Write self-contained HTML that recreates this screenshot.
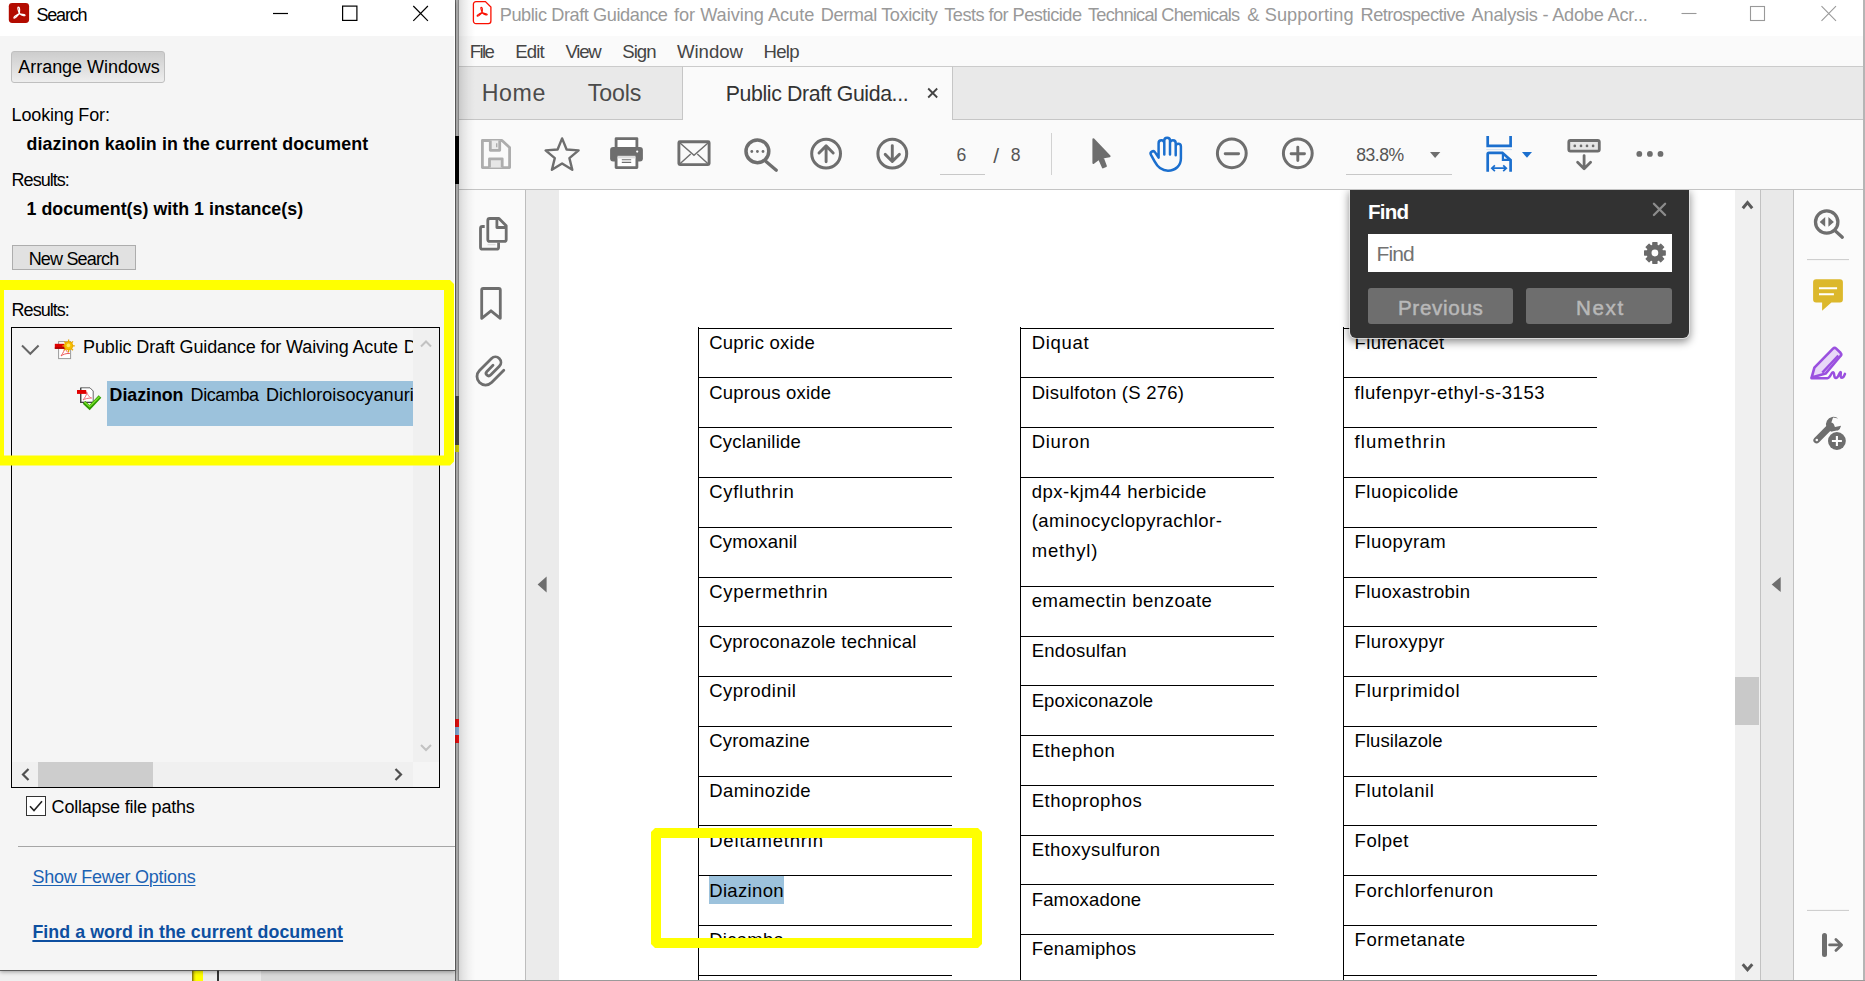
<!DOCTYPE html>
<html lang="en">
<head>
<meta charset="utf-8">
<title>Search - Adobe Acrobat Reader DC</title>
<style>
*{box-sizing:border-box;margin:0;padding:0}
html,body{width:1865px;height:981px;overflow:hidden;background:#fff}
body{font-family:"Liberation Sans",sans-serif;color:#000;position:relative}
.a{position:absolute}
.t{position:absolute;white-space:nowrap;line-height:1}
svg{position:absolute;overflow:visible}
.clip{position:absolute;overflow:hidden}
</style>
</head>
<body>
<div class="a" style="left:0px;top:0px;width:1865px;height:981px;background:#fff"></div><div class="a" style="left:455px;top:0px;width:4px;height:981px;background:linear-gradient(90deg,#666 0,#666 1px,#b4b4b4 1px,#b4b4b4 2px,#acacac 2px,#acacac 3px,#888 3px)"></div><div class="a" style="left:0px;top:969px;width:455px;height:12px;background:linear-gradient(90deg,#f0f0f0 0,#f0f0f0 192px,#7a6a10 192px,#e8e000 194.5px,#ffff00 196px,#ffff00 203.5px,#ececec 203.5px,#ececec 217.5px,#333 217.5px,#333 219px,#e9e9e9 219px,#e9e9e9 261px,#d9d9d9 261px)"></div><div class="a" style="left:455px;top:136px;width:4px;height:48px;background:#000"></div><div class="a" style="left:455px;top:396px;width:4px;height:49px;background:#444"></div><div class="a" style="left:455px;top:445px;width:4px;height:7px;background:#c8c800"></div><div class="a" style="left:455px;top:719px;width:4px;height:8px;background:#e01010"></div><div class="a" style="left:455px;top:727px;width:4px;height:8px;background:#7fa6d0"></div><div class="a" style="left:455px;top:735px;width:4px;height:8px;background:#e01010"></div>
<!-- search window -->
<div class="a" style="left:0px;top:0px;width:455px;height:969.5px;background:#f5f5f5;box-shadow:0 1px 0 rgba(70,70,70,.8),0 2px 4px rgba(0,0,0,.35)"></div><div class="a" style="left:0px;top:0px;width:455px;height:36px;background:#fff"></div><div class="a" style="left:454px;top:36px;width:1px;height:933px;background:#fff"></div><span class="t" style="left:36.50px;top:6.01px;font-size:18px;color:#000;letter-spacing:-1.209px;">Search</span><svg style="left:0;top:0" width="455" height="36"><g stroke="#000" stroke-width="1.2" fill="none"><path d="M273 13.5h15"/><rect x="342.6" y="6.1" width="14.3" height="14.3"/><path d="M413.3 6l14.6 14.8M427.9 6l-14.6 14.8"/></g></svg><div class="a" style="left:11px;top:51px;width:154px;height:31.5px;border:1px solid #bfbfbf;border-radius:3px;background:linear-gradient(#cdcdcd,#eeeeee)"></div><span class="t" style="left:18.30px;top:57.71px;font-size:18px;color:#000;letter-spacing:-0.040px;">Arrange Windows</span><span class="t" style="left:11.60px;top:106.32px;font-size:18px;color:#000;letter-spacing:-0.160px;">Looking For:</span><span class="t" style="left:26.50px;top:135.81px;font-size:17.8px;color:#000;font-weight:700;letter-spacing:0.127px;">diazinon kaolin in the current document</span><span class="t" style="left:11.60px;top:171.10px;font-size:18px;color:#000;letter-spacing:-0.976px;">Results:</span><span class="t" style="left:26.50px;top:200.62px;font-size:17.8px;color:#000;font-weight:700;letter-spacing:0.030px;">1 document(s) with 1 instance(s)</span><div class="a" style="left:12px;top:244.5px;width:124px;height:25px;border:1px solid #adadad;background:#e1e1e1"></div><span class="t" style="left:28.70px;top:249.60px;font-size:18px;color:#000;letter-spacing:-0.827px;">New Search</span><span class="t" style="left:11.60px;top:300.60px;font-size:18px;color:#000;letter-spacing:-0.976px;">Results:</span><div class="a" style="left:11px;top:327px;width:429px;height:461px;border:1px solid #000;background:#f5f5f5"></div><div class="a" style="left:413px;top:328px;width:26px;height:434px;background:#f0f0f0"></div><svg style="left:413px;top:328px" width="26" height="434"><g stroke="#c2c2c2" stroke-width="2" fill="none"><path d="M8 18.5l5-5 5 5"/><path d="M8 417l5 5 5-5"/></g></svg><div class="a" style="left:12px;top:762px;width:401px;height:25px;background:#f0f0f0"></div><div class="a" style="left:38px;top:762px;width:115px;height:25px;background:#cdcdcd"></div><svg style="left:12px;top:762px" width="401" height="25"><g stroke="#505050" stroke-width="2.2" fill="none"><path d="M16.5 7l-5.5 5.5 5.5 5.5"/><path d="M383.5 7l5.5 5.5-5.5 5.5"/></g></svg><svg style="left:0;top:0" width="455" height="500"><path d="M22 345.5l8.3 8.3 8.3-8.3" stroke="#666" stroke-width="2" fill="none"/></svg><div class="clip" style="left:12px;top:328px;width:400.5px;height:120px"><span class="t" style="left:71.10px;top:9.91px;font-size:18px;color:#000;letter-spacing:-0.121px;">Public Draft Guidance for Waiving Acute</span><span class="t" style="left:391.80px;top:9.91px;font-size:18px;color:#000;">Dermal Toxicity</span></div><div class="a" style="left:107px;top:381.3px;width:305.5px;height:44.7px;background:#9cc2dc"></div><div class="clip" style="left:107px;top:381px;width:305.5px;height:45px"><span class="t" style="left:2.60px;top:6.31px;font-size:17.8px;color:#000;font-weight:700;letter-spacing:-0.028px;">Diazinon</span><span class="t" style="left:83.60px;top:5.32px;font-size:18px;color:#000;letter-spacing:-0.422px;">Dicamba</span><span class="t" style="left:159.00px;top:5.32px;font-size:18px;color:#000;letter-spacing:0.039px;">Dichloroisocyanuric acid</span></div><div class="a" style="left:26px;top:795.5px;width:20px;height:20px;border:1.3px solid #333;background:#fff"></div><svg style="left:26px;top:795.5px" width="20" height="20"><path d="M4 10.2l4 4.3 8-9.3" stroke="#222" stroke-width="1.6" fill="none"/></svg><span class="t" style="left:51.60px;top:798.21px;font-size:18px;color:#000;letter-spacing:-0.216px;">Collapse file paths</span><div class="a" style="left:18px;top:846px;width:437px;height:1px;background:#a6a6a6"></div><span class="t" style="left:32.40px;top:868.41px;font-size:18px;color:#1b62b3;letter-spacing:-0.222px;text-decoration:underline;text-underline-offset:2px;text-decoration-thickness:1.2px;">Show Fewer Options</span><span class="t" style="left:32.40px;top:924.40px;font-size:17.8px;color:#0d4fa0;font-weight:700;letter-spacing:0.070px;text-decoration:underline;text-underline-offset:2px;text-decoration-thickness:1.5px;">Find a word in the current document</span><svg style="left:0;top:0" width="455" height="500" viewBox="0 0 455 500"><rect x="8.8" y="2.9" width="20.3" height="20.1" rx="3.4" fill="#b30b00"/><path d="M18.4 7.1C19.9 7.1 19.7 10.2 19.4 13.4C21.2 14.6 24.2 13.9 25 15C25.6 16.1 22.4 16.2 19.4 13.6C17.6 15.2 15.6 18.6 14.2 18.2C12.9 17.6 15.8 15.3 19.3 13.5C18.4 10.8 17.1 7.2 18.4 7.1Z" fill="none" stroke="#fff" stroke-width="1.2" stroke-linejoin="round"/><rect x="58.6" y="341.6" width="12" height="17" fill="#fff" stroke="#9a9a9a" stroke-width="1"/><path d="M61 356C63 353 65 350 64.6 346.5C66 351 68 353 69.6 353.5C66 353.2 63 354.5 61 356Z" fill="none" stroke="#ee5a5a" stroke-width="1"/><rect x="54.8" y="343.8" width="9.8" height="5" fill="#dd0000"/><rect x="54.8" y="347.4" width="9.8" height="1.4" fill="#a00000"/><circle cx="68.6" cy="345.8" r="4.6" fill="#f0b000"/><circle cx="68.6" cy="345.8" r="2.6" fill="#ffe040"/><g stroke="#e8a800" stroke-width="1.3"><path d="M68.6 339.6V352M62.4 345.8H74.8M64.2 341.4L73 350.2M73 341.4L64.2 350.2"/></g><circle cx="68.6" cy="345.8" r="3.4" fill="#f6c000"/><circle cx="68.4" cy="345.4" r="1.8" fill="#ffe860"/><path d="M80.7 387.8H90L93.2 391V402.4H80.7Z" fill="#fff" stroke="#666" stroke-width="1"/><path d="M80.7 387.8V402.4H93.2" fill="none" stroke="#444" stroke-width="1.3"/><path d="M83 400C85 397.5 87 395 86.6 391.8C88 396 90 397.6 91.6 398C88 398 85 398.8 83 400Z" fill="none" stroke="#ee6a7a" stroke-width="1"/><rect x="77" y="390" width="9.2" height="3.9" fill="#e00000"/><path d="M84 402.4L89.6 407.6L100 396.6" fill="none" stroke="#2e9a00" stroke-width="3.6" stroke-linejoin="miter"/><path d="M84.4 402L89.6 406.6L99.6 396.4" fill="none" stroke="#7be02a" stroke-width="1.4"/></svg>
<!-- acrobat window -->
<div class="a" style="left:459px;top:0px;width:1406px;height:981px;background:#fff"></div><div class="a" style="left:459px;top:36px;width:1406px;height:30px;background:#fafafa"></div><div class="a" style="left:459px;top:66px;width:1406px;height:54px;background:#e9e9e9;border-top:1px solid #cbcbcb;border-bottom:1px solid #c6c6c6"></div><div class="a" style="left:682px;top:66px;width:271px;height:54px;background:#fafafa;border-top:1px solid #cbcbcb;border-left:1px solid #c6c6c6;border-right:1px solid #c6c6c6"></div><div class="a" style="left:459px;top:120px;width:1406px;height:70px;background:#fafafa;border-bottom:1px solid #c4c4c4"></div><span class="t" style="left:499.70px;top:5.82px;font-size:18.2px;color:#999;letter-spacing:-0.436px;">Public Draft Guidance</span><span class="t" style="left:674.00px;top:5.82px;font-size:18.2px;color:#999;letter-spacing:-0.035px;">for Waiving Acute</span><span class="t" style="left:820.80px;top:5.82px;font-size:18.2px;color:#999;letter-spacing:-0.419px;">Dermal Toxicity</span><span class="t" style="left:944.30px;top:5.82px;font-size:18.2px;color:#999;letter-spacing:-0.549px;">Tests for Pesticide</span><span class="t" style="left:1088.00px;top:5.82px;font-size:18.2px;color:#999;letter-spacing:-0.755px;">Technical Chemicals</span><span class="t" style="left:1247.30px;top:5.82px;font-size:18.2px;color:#999;letter-spacing:0.095px;">&amp; Supporting</span><span class="t" style="left:1360.60px;top:5.82px;font-size:18.2px;color:#999;letter-spacing:-0.559px;">Retrospective</span><span class="t" style="left:1471.60px;top:5.82px;font-size:18.2px;color:#999;letter-spacing:-0.212px;">Analysis - Adobe Acr...</span><svg style="left:0;top:0" width="1865" height="36"><g stroke="#999" stroke-width="1.1" fill="none"><path d="M1681.5 13.5h15"/><rect x="1750.5" y="6.5" width="14" height="14"/><path d="M1821.5 6.2l14.5 14.6M1836 6.2l-14.5 14.6"/></g></svg><span class="t" style="left:469.70px;top:43.31px;font-size:18.6px;color:#454545;letter-spacing:-1.623px;">File</span><span class="t" style="left:515.30px;top:43.31px;font-size:18.6px;color:#454545;letter-spacing:-0.916px;">Edit</span><span class="t" style="left:565.50px;top:43.31px;font-size:18.6px;color:#454545;letter-spacing:-1.223px;">View</span><span class="t" style="left:622.20px;top:43.31px;font-size:18.6px;color:#454545;letter-spacing:-0.940px;">Sign</span><span class="t" style="left:677.00px;top:43.31px;font-size:18.6px;color:#454545;letter-spacing:-0.028px;">Window</span><span class="t" style="left:763.50px;top:43.31px;font-size:18.6px;color:#454545;letter-spacing:-0.750px;">Help</span><span class="t" style="left:481.80px;top:81.71px;font-size:23.2px;color:#4b4b4b;letter-spacing:0.547px;">Home</span><span class="t" style="left:587.70px;top:81.71px;font-size:23.2px;color:#4b4b4b;letter-spacing:-0.135px;">Tools</span><span class="t" style="left:725.80px;top:84.41px;font-size:21.3px;color:#333;letter-spacing:-0.389px;">Public Draft Guida...</span><svg style="left:0;top:0" width="1000" height="120"><path d="M928.2 88.5l9 9M937.2 88.5l-9 9" stroke="#444" stroke-width="1.8" fill="none"/></svg><span class="t" style="left:956.60px;top:146.61px;font-size:17.6px;color:#555;">6</span><span class="t" style="left:993.20px;top:144.81px;font-size:21px;color:#555;">/</span><span class="t" style="left:1010.80px;top:146.61px;font-size:17.6px;color:#555;">8</span><div class="a" style="left:940px;top:174px;width:44.5px;height:1px;background:#c8c8c8"></div><div class="a" style="left:1051px;top:133px;width:1px;height:42px;background:#d2d2d2"></div><span class="t" style="left:1356.20px;top:146.61px;font-size:17.6px;color:#555;letter-spacing:-0.473px;">83.8%</span><div class="a" style="left:1346px;top:174px;width:106px;height:1px;background:#c8c8c8"></div><svg style="left:0;top:0" width="600" height="36" viewBox="0 0 600 36"><path d="M476 1.6H485.4L490.9 7V21a2.6 2.6 0 0 1 -2.6 2.6H476a2.6 2.6 0 0 1 -2.6 -2.6V4.2a2.6 2.6 0 0 1 2.6 -2.6Z" fill="#fff" stroke="#fa0f00" stroke-width="1.3"/><path d="M481.3 7.2C482.6 7.2 482.5 10 482.2 12.4C483.8 13.8 486.6 13.2 487.2 14.3C487.6 15.4 484.8 15.3 482.2 12.8C480.6 14 478.5 16.7 477.3 16.2C476.3 15.6 479 13.8 482.1 12.6C481.3 10.2 480.2 7.3 481.3 7.2Z" fill="none" stroke="#fa0f00" stroke-width="1.1" stroke-linejoin="round"/></svg>
<div class="a" style="left:459px;top:190px;width:67px;height:791px;background:#fafafa;border-right:1px solid #bdbdbd"></div><div class="a" style="left:459px;top:0px;width:16px;height:981px;background:linear-gradient(90deg,rgba(0,0,0,.14),rgba(0,0,0,.085) 25%,rgba(0,0,0,.035) 60%,rgba(0,0,0,0))"></div><div class="a" style="left:526px;top:190px;width:33px;height:791px;background:#ebebeb"></div><div class="a" style="left:559px;top:190px;width:1176px;height:791px;background:#fff"></div><div class="a" style="left:1735px;top:190px;width:26px;height:791px;background:#f0f0f0;border-right:1px solid #c2c2c2"></div><div class="a" style="left:1735px;top:677px;width:24px;height:48px;background:#c9c9c9"></div><div class="a" style="left:1761px;top:190px;width:33px;height:791px;background:#e9e9e9;border-right:1px solid #c2c2c2"></div><div class="a" style="left:1794px;top:190px;width:71px;height:791px;background:#fbfbfb"></div><div class="a" style="left:1863px;top:0px;width:2px;height:981px;background:#b5b5b5"></div><div class="a" style="left:459px;top:979.5px;width:1406px;height:1.5px;background:#9a9a9a"></div><div class="clip" style="left:559px;top:190px;width:1176px;height:789.5px"><div class="a" style="left:-559px;top:-190px"><div class="a" style="left:698px;top:327px;width:1px;height:660px;background:#000"></div><div class="a" style="left:698px;top:328px;width:254px;height:1px;background:#000"></div><div class="a" style="left:698px;top:377px;width:254px;height:1px;background:#000"></div><div class="a" style="left:698px;top:427px;width:254px;height:1px;background:#000"></div><div class="a" style="left:698px;top:477px;width:254px;height:1px;background:#000"></div><div class="a" style="left:698px;top:527px;width:254px;height:1px;background:#000"></div><div class="a" style="left:698px;top:577px;width:254px;height:1px;background:#000"></div><div class="a" style="left:698px;top:626px;width:254px;height:1px;background:#000"></div><div class="a" style="left:698px;top:676px;width:254px;height:1px;background:#000"></div><div class="a" style="left:698px;top:726px;width:254px;height:1px;background:#000"></div><div class="a" style="left:698px;top:776px;width:254px;height:1px;background:#000"></div><div class="a" style="left:698px;top:825px;width:254px;height:1px;background:#000"></div><div class="a" style="left:698px;top:875px;width:254px;height:1px;background:#000"></div><div class="a" style="left:698px;top:925px;width:254px;height:1px;background:#000"></div><div class="a" style="left:698px;top:975px;width:254px;height:1px;background:#000"></div><div class="a" style="left:709.1px;top:876.4px;width:74.7px;height:27.4px;background:#9cc2dc"></div><span class="t" style="left:709.20px;top:334.01px;font-size:18.5px;color:#000;letter-spacing:0.249px;">Cupric oxide</span><span class="t" style="left:709.20px;top:384.01px;font-size:18.5px;color:#000;letter-spacing:0.219px;">Cuprous oxide</span><span class="t" style="left:709.20px;top:433.01px;font-size:18.5px;color:#000;letter-spacing:0.211px;">Cyclanilide</span><span class="t" style="left:709.20px;top:483.01px;font-size:18.5px;color:#000;letter-spacing:0.715px;">Cyfluthrin</span><span class="t" style="left:709.20px;top:533.01px;font-size:18.5px;color:#000;letter-spacing:0.203px;">Cymoxanil</span><span class="t" style="left:709.20px;top:583.01px;font-size:18.5px;color:#000;letter-spacing:0.668px;">Cypermethrin</span><span class="t" style="left:709.20px;top:632.60px;font-size:18.5px;color:#000;letter-spacing:0.253px;">Cyproconazole technical</span><span class="t" style="left:709.20px;top:682.01px;font-size:18.5px;color:#000;letter-spacing:0.493px;">Cyprodinil</span><span class="t" style="left:709.20px;top:732.01px;font-size:18.5px;color:#000;letter-spacing:0.215px;">Cyromazine</span><span class="t" style="left:709.20px;top:782.01px;font-size:18.5px;color:#000;letter-spacing:0.418px;">Daminozide</span><span class="t" style="left:709.20px;top:832.01px;font-size:18.5px;color:#000;letter-spacing:0.818px;">Deltamethrin</span><span class="t" style="left:709.20px;top:882.01px;font-size:18.5px;color:#000;letter-spacing:0.342px;">Diazinon</span><span class="t" style="left:709.20px;top:931.01px;font-size:18.5px;color:#000;letter-spacing:0.286px;">Dicamba</span><div class="a" style="left:1020px;top:327px;width:1px;height:660px;background:#000"></div><div class="a" style="left:1020px;top:328px;width:254px;height:1px;background:#000"></div><div class="a" style="left:1020px;top:377px;width:254px;height:1px;background:#000"></div><div class="a" style="left:1020px;top:427px;width:254px;height:1px;background:#000"></div><div class="a" style="left:1020px;top:477px;width:254px;height:1px;background:#000"></div><div class="a" style="left:1020px;top:586px;width:254px;height:1px;background:#000"></div><div class="a" style="left:1020px;top:636px;width:254px;height:1px;background:#000"></div><div class="a" style="left:1020px;top:685px;width:254px;height:1px;background:#000"></div><div class="a" style="left:1020px;top:735px;width:254px;height:1px;background:#000"></div><div class="a" style="left:1020px;top:785px;width:254px;height:1px;background:#000"></div><div class="a" style="left:1020px;top:835px;width:254px;height:1px;background:#000"></div><div class="a" style="left:1020px;top:884px;width:254px;height:1px;background:#000"></div><div class="a" style="left:1020px;top:934px;width:254px;height:1px;background:#000"></div><span class="t" style="left:1031.70px;top:334.01px;font-size:18.5px;color:#000;letter-spacing:0.697px;">Diquat</span><span class="t" style="left:1031.70px;top:384.01px;font-size:18.5px;color:#000;letter-spacing:0.247px;">Disulfoton (S 276)</span><span class="t" style="left:1031.70px;top:433.01px;font-size:18.5px;color:#000;letter-spacing:0.725px;">Diuron</span><span class="t" style="left:1031.70px;top:482.60px;font-size:18.5px;color:#000;letter-spacing:0.498px;">dpx-kjm44 herbicide</span><span class="t" style="left:1031.70px;top:512.21px;font-size:18.5px;color:#000;letter-spacing:0.463px;">(aminocyclopyrachlor-</span><span class="t" style="left:1031.70px;top:542.01px;font-size:18.5px;color:#000;letter-spacing:0.854px;">methyl)</span><span class="t" style="left:1031.70px;top:592.31px;font-size:18.5px;color:#000;letter-spacing:0.498px;">emamectin benzoate</span><span class="t" style="left:1031.70px;top:642.01px;font-size:18.5px;color:#000;letter-spacing:0.267px;">Endosulfan</span><span class="t" style="left:1031.70px;top:691.81px;font-size:18.5px;color:#000;letter-spacing:0.094px;">Epoxiconazole</span><span class="t" style="left:1031.70px;top:741.60px;font-size:18.5px;color:#000;letter-spacing:0.551px;">Ethephon</span><span class="t" style="left:1031.70px;top:791.60px;font-size:18.5px;color:#000;letter-spacing:0.517px;">Ethoprophos</span><span class="t" style="left:1031.70px;top:840.81px;font-size:18.5px;color:#000;letter-spacing:0.458px;">Ethoxysulfuron</span><span class="t" style="left:1031.70px;top:890.71px;font-size:18.5px;color:#000;letter-spacing:0.161px;">Famoxadone</span><span class="t" style="left:1031.70px;top:940.01px;font-size:18.5px;color:#000;letter-spacing:0.276px;">Fenamiphos</span><div class="a" style="left:1343px;top:327px;width:1px;height:660px;background:#000"></div><div class="a" style="left:1343px;top:328px;width:254px;height:1px;background:#000"></div><div class="a" style="left:1343px;top:377px;width:254px;height:1px;background:#000"></div><div class="a" style="left:1343px;top:427px;width:254px;height:1px;background:#000"></div><div class="a" style="left:1343px;top:477px;width:254px;height:1px;background:#000"></div><div class="a" style="left:1343px;top:527px;width:254px;height:1px;background:#000"></div><div class="a" style="left:1343px;top:577px;width:254px;height:1px;background:#000"></div><div class="a" style="left:1343px;top:626px;width:254px;height:1px;background:#000"></div><div class="a" style="left:1343px;top:676px;width:254px;height:1px;background:#000"></div><div class="a" style="left:1343px;top:726px;width:254px;height:1px;background:#000"></div><div class="a" style="left:1343px;top:776px;width:254px;height:1px;background:#000"></div><div class="a" style="left:1343px;top:825px;width:254px;height:1px;background:#000"></div><div class="a" style="left:1343px;top:875px;width:254px;height:1px;background:#000"></div><div class="a" style="left:1343px;top:925px;width:254px;height:1px;background:#000"></div><div class="a" style="left:1343px;top:975px;width:254px;height:1px;background:#000"></div><span class="t" style="left:1354.60px;top:334.01px;font-size:18.5px;color:#000;letter-spacing:0.354px;">Flufenacet</span><span class="t" style="left:1354.60px;top:384.01px;font-size:18.5px;color:#000;letter-spacing:0.524px;">flufenpyr-ethyl-s-3153</span><span class="t" style="left:1354.60px;top:433.01px;font-size:18.5px;color:#000;letter-spacing:1.075px;">flumethrin</span><span class="t" style="left:1354.60px;top:483.01px;font-size:18.5px;color:#000;letter-spacing:0.460px;">Fluopicolide</span><span class="t" style="left:1354.60px;top:533.01px;font-size:18.5px;color:#000;letter-spacing:0.471px;">Fluopyram</span><span class="t" style="left:1354.60px;top:583.01px;font-size:18.5px;color:#000;letter-spacing:0.363px;">Fluoxastrobin</span><span class="t" style="left:1354.60px;top:632.60px;font-size:18.5px;color:#000;letter-spacing:0.394px;">Fluroxypyr</span><span class="t" style="left:1354.60px;top:682.01px;font-size:18.5px;color:#000;letter-spacing:0.760px;">Flurprimidol</span><span class="t" style="left:1354.60px;top:732.01px;font-size:18.5px;color:#000;letter-spacing:0.058px;">Flusilazole</span><span class="t" style="left:1354.60px;top:782.01px;font-size:18.5px;color:#000;letter-spacing:0.585px;">Flutolanil</span><span class="t" style="left:1354.60px;top:832.01px;font-size:18.5px;color:#000;letter-spacing:0.497px;">Folpet</span><span class="t" style="left:1354.60px;top:882.01px;font-size:18.5px;color:#000;letter-spacing:0.578px;">Forchlorfenuron</span><span class="t" style="left:1354.60px;top:931.01px;font-size:18.5px;color:#000;letter-spacing:0.547px;">Formetanate</span></div></div><svg style="left:0;top:0" width="1865" height="981" viewBox="0 0 1865 981"><g stroke="#adadad" stroke-width="2.8" fill="none" stroke-linejoin="round"><path d="M482.4 140.5H502L509.6 147.6V167.6H482.4Z" fill="#fafafa"/><path d="M490.3 140.5V150.3H499.7V140.5" fill="#ececec"/><path d="M489.5 167.6V158.8H502.2V167.6" fill="#e6e6e6"/></g><path d="M496.7 143.3v4" stroke="#adadad" stroke-width="1.4"/><path d="M562.1 138.4L566.6 149.5L578.6 150.4L569.4 158.1L572.3 169.8L562.1 163.4L551.9 169.8L554.8 158.1L545.6 150.4L557.6 149.5Z" fill="none" stroke="#6e6e6e" stroke-width="2.4" stroke-linejoin="round"/><rect x="616.1" y="138.6" width="20.8" height="10" fill="#fff" stroke="#6e6e6e" stroke-width="2.8" stroke-linejoin="round"/><rect x="610.1" y="146.9" width="32.8" height="14.6" rx="3" fill="#6e6e6e"/><rect x="616.1" y="155.8" width="20.8" height="11.8" fill="#fff" stroke="#6e6e6e" stroke-width="2.8" stroke-linejoin="round"/><rect x="617.5" y="155.8" width="18" height="2.6" fill="#dedede"/><path d="M621.8 159.8h9.4M621.8 162.4h9.4" stroke="#6e6e6e" stroke-width="1.1"/><circle cx="637.2" cy="151.6" r="1.1" fill="#fff"/><rect x="678.9" y="141.8" width="30.2" height="22.8" rx="1" fill="none" stroke="#6e6e6e" stroke-width="2.9"/><path d="M680 143L694 155.3L708 143M680 163.8L690.7 154M708 163.8L697.3 154" fill="none" stroke="#6e6e6e" stroke-width="1.4"/><circle cx="757.4" cy="151.3" r="11.4" fill="none" stroke="#6e6e6e" stroke-width="3.5"/><path d="M766 161.6L776.3 170.2" stroke="#6e6e6e" stroke-width="3.3" stroke-linecap="round"/><g fill="#6e6e6e"><circle cx="751.8" cy="151.5" r="1.4"/><circle cx="757.4" cy="151.5" r="1.4"/><circle cx="763" cy="151.5" r="1.4"/></g><circle cx="826.1" cy="153.7" r="14.4" fill="none" stroke="#6e6e6e" stroke-width="3"/><path d="M826.1 161.8V146.6M819 153L826.1 145.9L833.2 153" fill="none" stroke="#6e6e6e" stroke-width="2.9" stroke-linecap="round" stroke-linejoin="round"/><circle cx="892.3" cy="153.7" r="14.4" fill="none" stroke="#6e6e6e" stroke-width="3"/><path d="M892.3 145.6V160.8M885.2 154.4L892.3 161.5L899.4 154.4" fill="none" stroke="#6e6e6e" stroke-width="2.9" stroke-linecap="round" stroke-linejoin="round"/><path d="M1093.4 139.2V163L1099 158.6L1102.9 167.4L1105.9 166.1L1102.6 157.4L1109.6 156.2Z" fill="#6e6e6e" stroke="#6e6e6e" stroke-width="2" stroke-linejoin="round"/><g fill="none" stroke="#1b6fce" stroke-width="2.5" stroke-linecap="round" stroke-linejoin="round"><path d="M1158.6 157.6V143.2a2.85 2.85 0 0 1 5.7 0V154.5M1164.3 143.2V140.6a2.85 2.85 0 0 1 5.7 0V154.5M1170 143.2a2.85 2.85 0 0 1 5.7 0V155.2M1175.7 146.4a2.6 2.6 0 0 1 5.2 0V158.5C1180.9 165.5 1175.5 170.7 1168 170.7C1161 170.7 1157.3 166.6 1154.6 161.4L1151 154.9a2.4 2.4 0 0 1 4.1 -2.5L1158.6 157.6"/></g><circle cx="1231.8" cy="153.3" r="14.4" fill="none" stroke="#6e6e6e" stroke-width="3"/><path d="M1225.2 153.8H1238.6" stroke="#6e6e6e" stroke-width="2.9" stroke-linecap="round"/><circle cx="1297.8" cy="153.3" r="14.4" fill="none" stroke="#6e6e6e" stroke-width="3"/><path d="M1291.1 153.8H1304.5M1297.8 147.1V160.5" stroke="#6e6e6e" stroke-width="2.9" stroke-linecap="round"/><path d="M1430 151.9H1440.3L1435.1 158Z" fill="#6e6e6e"/><path d="M1522 152.1H1532L1527 157.8Z" fill="#1b6fce"/><g fill="none" stroke="#1b6fce" stroke-width="2.7"><path d="M1487.7 136V145.9H1510.6V136"/><path d="M1487.7 171.8V154a1.2 1.2 0 0 1 1.2 -1.2H1502.4L1510.6 160.2V171.8"/><path d="M1502.9 153.4V159.9H1510" stroke-width="2.2"/></g><path d="M1486.3 149.6H1512" stroke="#cfdff2" stroke-width="1"/><path d="M1492.5 168.2H1505.6M1494.9 165.3L1491.8 168.2L1494.9 171.1M1503.2 165.3L1506.3 168.2L1503.2 171.1" fill="none" stroke="#1b6fce" stroke-width="1.7"/><rect x="1568.8" y="140.5" width="30.5" height="10.6" rx="1.6" fill="#e6e6e6" stroke="#6e6e6e" stroke-width="2.8"/><g fill="#6e6e6e"><circle cx="1574.8" cy="145.9" r="1.35"/><circle cx="1581" cy="145.9" r="1.35"/><circle cx="1587" cy="145.9" r="1.35"/><circle cx="1593.1" cy="145.9" r="1.35"/></g><path d="M1584.1 155.6V168.2M1577.6 162.3L1584.1 168.8L1590.6 162.3" fill="none" stroke="#6e6e6e" stroke-width="2.8" stroke-linecap="round" stroke-linejoin="round"/><g fill="#6e6e6e"><circle cx="1639.3" cy="153.9" r="2.9"/><circle cx="1649.9" cy="153.9" r="2.9"/><circle cx="1660.5" cy="153.9" r="2.9"/></g><g fill="#6e6e6e"></g><g fill="none" stroke="#6e6e6e" stroke-width="2.8" stroke-linejoin="round" stroke-linecap="butt"><path d="M484.7 226.5H482.5a2 2 0 0 0 -2 2V247.2a2 2 0 0 0 2 2H496.6a2 2 0 0 0 2 -2V242.6"/><path d="M489.8 218.5H499L506.2 225.7V239.4a2 2 0 0 1 -2 2H489.8a2 2 0 0 1 -2 -2V220.5a2 2 0 0 1 2 -2Z"/><path d="M496.9 218.5V227.5H506.2"/></g><path d="M487.5 244.6H495.6" stroke="#dedede" stroke-width="1.4"/><path d="M481.7 318.3V290a1.5 1.5 0 0 1 1.5 -1.5H498.8a1.5 1.5 0 0 1 1.5 1.5V318.3L491 310.8Z" fill="none" stroke="#6e6e6e" stroke-width="2.8" stroke-linejoin="round"/><path d="M493 365.3L486.9 371.4A2.6 2.6 0 0 0 490.6 375.1L499.3 366.3A5.5 5.5 0 0 0 491.5 358.5L479.5 370.5A8.55 8.55 0 0 0 491.6 382.6L503.8 370.3" fill="none" stroke="#6e6e6e" stroke-width="2.8" stroke-linecap="round"/><path d="M546.6 576.6V592.4L537.6 584.5Z" fill="#6e6e6e"/><path d="M1780.7 576.9V592.1L1771.7 584.5Z" fill="#6e6e6e"/><path d="M1742.8 208.3L1747.5 202.6L1752.2 208.3" fill="none" stroke="#5a5a5a" stroke-width="3"/><path d="M1742.7 964.2L1747.5 969.8L1752.3 964.2" fill="none" stroke="#5a5a5a" stroke-width="2.9"/><circle cx="1826.7" cy="222" r="11.2" fill="none" stroke="#6e6e6e" stroke-width="3.3"/><path d="M1835 230.6L1842.3 237.2" stroke="#6e6e6e" stroke-width="3.3" stroke-linecap="round"/><path d="M1825.2 217.1V226.7L1819.7 221.9ZM1828.4 217.1V226.7L1833.9 221.9Z" fill="#6e6e6e"/><path d="M1807 259.6H1849M1807 910.4H1849" stroke="#cacaca" stroke-width="1"/><path d="M1816.1 279.3H1839.9a3 3 0 0 1 3 3V299.4a3 3 0 0 1 -3 3H1831.4L1822.1 310.7V302.4H1816.1a3 3 0 0 1 -3 -3V282.3a3 3 0 0 1 3 -3Z" fill="#dcb82c"/><path d="M1819 288.3H1837.1M1819 294.3H1833.9" stroke="#fff" stroke-width="2"/><path d="M1814.4 367.6L1833 348.6a2.3 2.3 0 0 1 3.2 0L1840.5 352.8a2.3 2.3 0 0 1 0 3.2L1825.6 373.6L1811.6 377.6Z" fill="#e8d8f7" stroke="#9a50df" stroke-width="2.6" stroke-linejoin="round"/><path d="M1822.3 372.6L1838.3 355.5" stroke="#9a50df" stroke-width="2.4"/><path d="M1811.6 378.2H1827.5C1830.5 378.2 1831 372.3 1833 372.3C1835 372.3 1833.2 378 1836 378C1838.6 378 1839.4 372 1840.5 372C1841.5 372 1839.5 377.8 1841.8 377.8C1843.5 377.8 1844.3 375.6 1845 373.8" fill="none" stroke="#9a50df" stroke-width="2.5" stroke-linecap="round" stroke-linejoin="round"/><path d="M1816.6 440.2L1831 425.8" stroke="#6e6e6e" stroke-width="6.4" stroke-linecap="round"/><path d="M1838.9 419.3A7.6 7.6 0 1 0 1840.6 426.8L1834.5 427.3L1831.3 422.6L1833.8 417.6Z" fill="#6e6e6e" transform="rotate(-8 1833 423)"/><circle cx="1816.8" cy="440" r="1.3" fill="#fbfbfb"/><circle cx="1836.9" cy="441" r="10.4" fill="#fbfbfb"/><circle cx="1836.9" cy="441" r="8.9" fill="#6e6e6e"/><path d="M1831.9 441H1841.9M1836.9 436V446" stroke="#fff" stroke-width="2.1"/><rect x="1822" y="933" width="5" height="24" rx="2.5" fill="#6e6e6e"/><path d="M1829.6 944.9H1841M1835.9 939.4L1841.6 944.9L1835.9 950.4" fill="none" stroke="#6e6e6e" stroke-width="2.8" stroke-linecap="round" stroke-linejoin="round"/></svg>
<div class="clip" style="left:1320px;top:190px;width:400px;height:180px"><div class="a" style="left:30.299999999999955px;top:0px;width:338.6px;height:147.9px;background:#323232;border-radius:0 0 6px 6px;box-shadow:0 0 0 1px rgba(236,236,236,.7),0 3px 8px 1px rgba(0,0,0,.45)"></div></div><span class="t" style="left:1367.90px;top:202.11px;font-size:20.6px;color:#fff;font-weight:700;letter-spacing:-0.723px;">Find</span><svg style="left:1650px;top:200px" width="20" height="20"><path d="M3.9 3.8l11.2 11.2M15.1 3.8L3.9 15" stroke="#8c8c8c" stroke-width="2.3" stroke-linecap="round" fill="none"/></svg><div class="a" style="left:1368px;top:234.2px;width:304.3px;height:37.5px;background:#fff"></div><span class="t" style="left:1376.50px;top:243.00px;font-size:21px;color:#727272;letter-spacing:-0.886px;">Find</span><svg style="left:0;top:0" width="1865" height="400"><path d="M1652.8 245.4L1652.8 242.7L1657.0 242.7L1657.0 245.4L1658.8 246.1L1660.7 244.2L1663.7 247.2L1661.8 249.1L1662.5 250.9L1665.2 250.9L1665.2 255.1L1662.5 255.1L1661.8 256.9L1663.7 258.8L1660.7 261.8L1658.8 259.9L1657.0 260.6L1657.0 263.3L1652.8 263.3L1652.8 260.6L1651.0 259.9L1649.1 261.8L1646.1 258.8L1648.0 256.9L1647.3 255.1L1644.6 255.1L1644.6 250.9L1647.3 250.9L1648.0 249.1L1646.1 247.2L1649.1 244.2L1651.0 246.1Z" fill="#6a6a6a" stroke="#6a6a6a" stroke-width="1.2" stroke-linejoin="round"/><circle cx="1654.9" cy="253" r="3.4" fill="#fff"/></svg><div class="a" style="left:1367.5px;top:288.4px;width:145.8px;height:35.8px;background:#6e6e6e;border-radius:3px"></div><div class="a" style="left:1526.4px;top:288.4px;width:146px;height:35.8px;background:#6e6e6e;border-radius:3px"></div><span class="t" style="left:1397.90px;top:297.61px;font-size:20.6px;color:#b8b8b8;letter-spacing:0.696px;-webkit-text-stroke:0.5px #b8b8b8;">Previous</span><span class="t" style="left:1576.10px;top:297.61px;font-size:20.6px;color:#b8b8b8;letter-spacing:1.580px;-webkit-text-stroke:0.5px #b8b8b8;">Next</span>
<!-- highlight overlays -->
<svg style="left:-6px;top:280px" width="460" height="185.5"><path d="M4 0H456L460 4V181.5L456 185.5H4L0 181.5V4Z M10 10V175.5H450V10Z" fill="#ffff00" fill-rule="evenodd"/></svg><svg style="left:651px;top:828px" width="331" height="120"><path d="M4 0H327L331 4V116L327 120H4L0 116V4Z M10 10V110H321V10Z" fill="#ffff00" fill-rule="evenodd"/></svg>
</body>
</html>
